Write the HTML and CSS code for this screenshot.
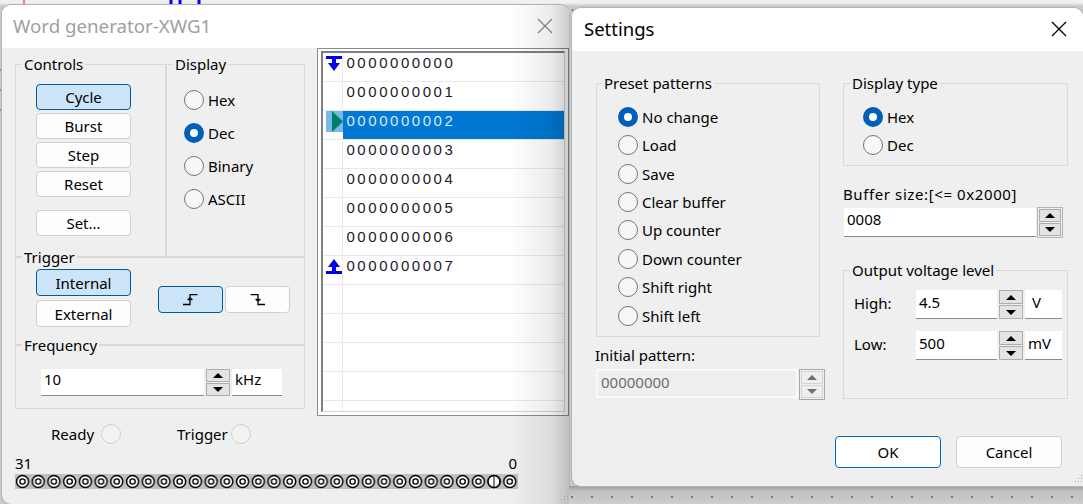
FILE: index.html
```html
<!DOCTYPE html>
<html lang="en">
<head>
    <meta charset="UTF-8">
    <title>Word generator</title>
    <link rel="stylesheet" href="styles.css">
</head>
<body>
    <!-- Schematic behind the windows -->
    <svg class="schematic" width="1083" height="504">
        <path d="M24 0V4M0 70H2M0 90H2M0 110H2" stroke="#e02020" fill="none"/>
        <path d="M171 0V4M180 0V4M199 0V4" stroke="#0000ff" stroke-width="3" fill="none"/>
    </svg>

    <div class="window word-window">
        <div class="titlebar">
            <span class="title title-inactive">Word generator-XWG1</span>
            <svg class="close" width="16" height="16" viewBox="0 0 16 16"><path d="M1 1L15 15M15 1L1 15" stroke="#8a8a8a" stroke-width="1.3"/></svg>
        </div>
        <div class="word-body">
            <div class="word-left">
                <div class="frame-top">
                    <fieldset class="group controls">
                        <legend>Controls</legend>
                        <button class="btn is-on">Cycle</button>
                        <button class="btn">Burst</button>
                        <button class="btn">Step</button>
                        <button class="btn">Reset</button>
                        <button class="btn btn-set">Set...</button>
                    </fieldset>
                    <fieldset class="group display">
                        <legend>Display</legend>
                        <label class="radio-row"><input type="radio" name="display">Hex</label>
                        <label class="radio-row"><input type="radio" name="display" checked>Dec</label>
                        <label class="radio-row"><input type="radio" name="display">Binary</label>
                        <label class="radio-row"><input type="radio" name="display">ASCII</label>
                    </fieldset>
                </div>
                <fieldset class="group trigger">
                    <legend>Trigger</legend>
                    <div class="trigger-src">
                        <button class="btn is-on">Internal</button>
                        <button class="btn">External</button>
                    </div>
                    <div class="edge-btns">
                        <button class="btn edge is-on">
                            <svg width="15" height="12" viewBox="0 0 15 12"><path d="M0 10.5H7V0.5H14.5M4.5 5.5H9.5M5.5 4.5H8.5" stroke="#000" stroke-width="1.3" fill="none"/></svg>
                        </button>
                        <button class="btn edge">
                            <svg width="15" height="12" viewBox="0 0 15 12"><path d="M0.5 0.5H8V10.5H15M5.5 5.5H10.5M6.5 6.5H9.5" stroke="#000" stroke-width="1.3" fill="none"/></svg>
                        </button>
                    </div>
                </fieldset>
                <fieldset class="group frequency">
                    <legend>Frequency</legend>
                    <input class="field freq-value" value="10">
                    <div class="spin"><span class="spin-btn up"></span><span class="spin-btn down"></span></div>
                    <input class="field freq-unit" value="kHz">
                </fieldset>
                <div class="status">
                    <div class="status-item ready">Ready <span class="led"></span></div>
                    <div class="status-item">Trigger <span class="led"></span></div>
                </div>
            </div>

            <div class="word-list">
                <div class="word-list-inner">
                    <div class="row"><span class="mark"><svg width="16" height="16" viewBox="0 0 16 16"><path d="M0 0H16V3H10V7H14L8 15L2 7H6V3H0Z" fill="#0000f0"/></svg></span><span class="val">0000000000</span></div>
                    <div class="row"><span class="mark"></span><span class="val">0000000001</span></div>
                    <div class="row row-current"><span class="mark"><svg width="17" height="21" viewBox="0 0 17 21"><rect width="17" height="21" fill="#7ab8e6"/><path d="M6 0L17 10.5L6 21Z" fill="#00806a"/></svg></span><span class="val">0000000002</span></div>
                    <div class="row"><span class="mark"></span><span class="val">0000000003</span></div>
                    <div class="row"><span class="mark"></span><span class="val">0000000004</span></div>
                    <div class="row"><span class="mark"></span><span class="val">0000000005</span></div>
                    <div class="row"><span class="mark"></span><span class="val">0000000006</span></div>
                    <div class="row"><span class="mark"><svg width="16" height="16" viewBox="0 0 16 16"><path d="M8 0L14 8H10V12H16V15H0V12H6V8H2Z" fill="#0000f0"/></svg></span><span class="val">0000000007</span></div>
                    <div class="row"><span class="mark"></span><span class="val"></span></div>
                    <div class="row"><span class="mark"></span><span class="val"></span></div>
                    <div class="row"><span class="mark"></span><span class="val"></span></div>
                    <div class="row"><span class="mark"></span><span class="val"></span></div>
                    <div class="row"><span class="mark"></span><span class="val"></span></div>
                </div>
            </div>
        </div>

        <div class="bits">
            <div class="bit-labels"><span>31</span><span>0</span></div>
            <svg class="pins" width="503" height="15" viewBox="0 0 503 15">
                <defs>
                    <pattern id="pin" width="15.72" height="15" patternUnits="userSpaceOnUse">
                        <rect width="15.72" height="15" fill="#c0c0c0"/>
                        <circle cx="7.5" cy="7.5" r="6" fill="#fff" stroke="#000" stroke-width="1.5"/>
                        <circle cx="7.5" cy="7.5" r="2.6" fill="#fff" stroke="#000" stroke-width="1.4"/>
                    </pattern>
                </defs>
                <rect width="503" height="15" fill="url(#pin)"/>
                <circle cx="479" cy="7.5" r="6" fill="#fff" stroke="#000" stroke-width="1.5"/>
                <path d="M479 2V13" stroke="#000"/>
            </svg>
        </div>

        <div class="side-shade"></div>
        <svg class="grip grip-left" width="12" height="12"><path d="M10 1h1v1h-1zM7 4h1v1H7zM10 4h1v1h-1zM4 7h1v1H4zM7 7h1v1H7zM10 7h1v1h-1z" fill="#a0a0a0"/></svg>
    </div>

    <div class="window settings-window">
        <div class="titlebar">
            <span class="title">Settings</span>
            <svg class="close" width="16" height="16" viewBox="0 0 16 16"><path d="M1 1L15 15M15 1L1 15" stroke="#000" stroke-width="1.3"/></svg>
        </div>
        <div class="settings-body">
            <div class="settings-cols">
                <div class="settings-left">
                    <fieldset class="group preset">
                        <legend>Preset patterns</legend>
                        <label class="radio-row"><input type="radio" name="preset" checked>No change</label>
                        <label class="radio-row"><input type="radio" name="preset">Load</label>
                        <label class="radio-row"><input type="radio" name="preset">Save</label>
                        <label class="radio-row"><input type="radio" name="preset">Clear buffer</label>
                        <label class="radio-row"><input type="radio" name="preset">Up counter</label>
                        <label class="radio-row"><input type="radio" name="preset">Down counter</label>
                        <label class="radio-row"><input type="radio" name="preset">Shift right</label>
                        <label class="radio-row"><input type="radio" name="preset">Shift left</label>
                    </fieldset>
                    <div class="field-label initial-label">Initial pattern:</div>
                    <div class="input-spin">
                        <input class="field field-disabled initial-value" value="00000000" disabled>
                        <div class="spin spin-boxed spin-disabled"><span class="spin-btn up"></span><span class="spin-btn down"></span></div>
                    </div>
                </div>
                <div class="settings-right">
                    <fieldset class="group display-type">
                        <legend>Display type</legend>
                        <label class="radio-row"><input type="radio" name="dtype" checked>Hex</label>
                        <label class="radio-row"><input type="radio" name="dtype">Dec</label>
                    </fieldset>
                    <div class="field-label buffer-label">Buffer size:[&lt;= 0x2000]</div>
                    <div class="input-spin">
                        <input class="field buffer-value" value="0008">
                        <div class="spin spin-boxed"><span class="spin-btn up"></span><span class="spin-btn down"></span></div>
                    </div>
                    <fieldset class="group voltage">
                        <legend>Output voltage level</legend>
                        <div class="volt-row">
                            <span class="volt-name">High:</span>
                            <input class="field volt-value" value="4.5">
                            <div class="spin"><span class="spin-btn up"></span><span class="spin-btn down"></span></div>
                            <input class="field volt-unit" value=" V">
                        </div>
                        <div class="volt-row">
                            <span class="volt-name">Low:</span>
                            <input class="field volt-value" value="500">
                            <div class="spin"><span class="spin-btn up"></span><span class="spin-btn down"></span></div>
                            <input class="field volt-unit" value="mV">
                        </div>
                    </fieldset>
                </div>
            </div>
            <div class="settings-footer">
                <button class="btn btn-dialog btn-default">OK</button>
                <button class="btn btn-dialog">Cancel</button>
            </div>
        </div>
        <svg class="grip grip-right" width="12" height="12"><path d="M10 1h1v1h-1zM7 4h1v1H7zM10 4h1v1h-1zM4 7h1v1H4zM7 7h1v1H7zM10 7h1v1h-1z" fill="#a0a0a0"/></svg>
    </div>

    <div class="desk-shadow"></div>
</body>
</html>
```

FILE: styles.css
```css
/* Desktop behind the windows */
body {
    margin: 0;
    width: 1083px;
    height: 504px;
    position: relative;
    overflow: hidden;
    font-family: "Noto Sans", sans-serif;
    font-size: 15px;
    color: #000;
    background-color: #c9c9c9;
    background-image:
        linear-gradient(to bottom, #f0f0f0 3px, rgba(240, 240, 240, 0) 6px),
        radial-gradient(circle, #808080 1px, transparent 1.2px);
    background-size: 100% 100%, 20px 20px;
    background-position: 0 0, 2.5px 0;
}

.schematic {
    position: absolute;
    left: 0;
    top: 0;
}

.desk-shadow {
    position: absolute;
    left: 569px;
    top: 486px;
    width: 514px;
    height: 18px;
    background-color: #c2c2c2;
    background-image:
        radial-gradient(circle, #777 1px, transparent 1.2px),
        linear-gradient(to bottom, #9a9a9a, #c0c0c0 5px, #cdcdcd);
    background-size: 20px 20px, 100% 100%;
    background-position: -7px 1px, 0 0;
}

/* Windows */
.window {
    position: absolute;
    background: #efefef;
    overflow: hidden;
    box-shadow: 0 0 0 1px #b4b4b4;
}

.word-window {
    left: 2px;
    top: 5px;
    width: 567px;
    height: 499px;
    border-radius: 9px 9px 0 9px;
}

.settings-window {
    left: 572px;
    top: 8px;
    width: 511px;
    height: 478px;
    border-radius: 9px 9px 0 9px;
    z-index: 2;
}

.titlebar {
    height: 43px;
    box-sizing: border-box;
    background: #fff;
    display: flex;
    align-items: center;
    justify-content: space-between;
    padding: 0 16px 2px 11px;
}

.settings-window .titlebar {
    padding-left: 12px;
}

.title {
    font-size: 18.5px;
}

.title-inactive {
    color: #a0a0a0;
    font-size: 18.7px;
}

.side-shade {
    position: absolute;
    right: 0;
    top: 0;
    bottom: 0;
    width: 60px;
    background: linear-gradient(to right, rgba(0, 0, 0, 0), rgba(0, 0, 0, 0.08) 70%, rgba(0, 0, 0, 0.2));
    pointer-events: none;
}

.grip {
    position: absolute;
    right: 0;
    bottom: 0;
}

/* Group boxes, --pad is the left padding that the legend has to undo */
.group {
    --pad: 0px;
    margin: 0;
    padding: 0 0 0 var(--pad);
    min-width: 0;
    border: 1px solid #d9d9d9;
    box-sizing: border-box;
}

.group legend {
    padding: 0 2px;
    margin-left: calc(6px - var(--pad));
    line-height: 20px;
}

/* Buttons */
.btn {
    display: block;
    box-sizing: border-box;
    width: 95px;
    height: 26px;
    padding: 0;
    font: inherit;
    color: #000;
    background: #fdfdfd;
    border: 1px solid #d0d0d0;
    border-radius: 4px;
}

.btn.is-on {
    background: #cce4f7;
    border-color: #005a9e;
}

/* Radios */
.radio-row {
    display: flex;
    align-items: center;
    gap: 4px;
}

.radio-row input {
    appearance: none;
    box-sizing: border-box;
    width: 20px;
    height: 20px;
    margin: 0;
    background: #f7f7f7;
    border: 1.3px solid #757575;
    border-radius: 50%;
}

.radio-row input:checked {
    background: #fff;
    border: 6px solid #0060b8;
}

/* Inputs */
.field {
    box-sizing: border-box;
    height: 27px;
    margin: 0;
    padding: 0 3px 7px;
    font: inherit;
    color: #000;
    background: #fff;
    border: 0;
    border-bottom: 1px solid #8a8a8a;
    outline: none;
}

.field-disabled {
    color: #6d6d6d;
    background: #eeeeee;
    border: 2px solid #fafafa;
}

/* Spin buttons */
.spin {
    display: flex;
    flex-direction: column;
    gap: 1px;
    width: 24px;
}

.spin-btn {
    box-sizing: border-box;
    flex: 1;
    display: flex;
    align-items: center;
    justify-content: center;
    background: #e3e3e3;
    border: 1px solid #adadad;
}

.spin-btn::after {
    content: "";
    border-left: 5px solid transparent;
    border-right: 5px solid transparent;
}

.spin-btn.up::after {
    border-bottom: 5px solid #000;
}

.spin-btn.down::after {
    border-top: 5px solid #000;
}

.spin-boxed {
    box-sizing: border-box;
    width: 26px;
    padding: 1px;
    border: 1px solid #b5b5b5;
}

.spin-disabled {
    border-color: #a8a8a8;
}

.spin-disabled .spin-btn {
    background: #eeeeee;
    border-color: #d4d4d4;
}

.spin-disabled .spin-btn.up::after {
    border-bottom-color: #707070;
}

.spin-disabled .spin-btn.down::after {
    border-top-color: #707070;
}

.input-spin {
    display: flex;
    gap: 1px;
}

.field-label {
    line-height: 20px;
}

/* Word generator, left side */
.word-body {
    display: flex;
    height: 368px;
}

.word-left {
    box-sizing: border-box;
    width: 315px;
    padding: 6px 0 0 13px;
}

.frame-top {
    display: flex;
    width: 290px;
}

.controls {
    --pad: 20px;
    width: 152px;
    height: 204px;
    padding-top: 10px;
    border-width: 1px 2px 0 1px;
}

.controls .btn {
    margin-bottom: 3px;
}

.controls .btn-set {
    margin-top: 13px;
}

.display {
    --pad: 17px;
    flex: 1;
    padding-top: 9px;
    border-width: 1px 1px 0 0;
}

.display .radio-row {
    height: 33px;
}

.trigger {
    --pad: 20px;
    width: 290px;
    height: 98px;
    margin-top: -11px;
    padding-top: 2px;
    display: flex;
    align-items: flex-start;
    border-width: 2px 1px 0 1px;
}

.trigger-src .btn {
    height: 27px;
    margin-bottom: 4px;
}

.edge-btns {
    display: flex;
    gap: 2px;
    margin-left: 27px;
    margin-top: 17px;
}

.edge {
    width: 65px;
    height: 27px;
    display: flex;
    align-items: center;
    justify-content: center;
}

.frequency {
    --pad: 25px;
    width: 290px;
    height: 74px;
    margin-top: -10px;
    padding-top: 14px;
    display: flex;
    align-items: flex-start;
    gap: 2px;
    border-width: 2px 1px 1px 1px;
}

.freq-value {
    width: 163px;
}

.freq-unit {
    width: 50px;
}

.frequency .spin {
    height: 27px;
}

.status {
    display: grid;
    grid-template-columns: 126px auto;
    justify-content: start;
    margin: 15px 0 0 36px;
    width: 250px;
}

.status-item {
    display: flex;
    align-items: center;
    gap: 3px;
}

.status-item.ready {
    gap: 7px;
}

.led {
    width: 20px;
    height: 20px;
    box-sizing: border-box;
    border: 1px solid #cfcfcf;
    border-radius: 50%;
    background: #f2f2f2;
}

/* Word list */
.word-list {
    box-sizing: border-box;
    width: 252px;
    height: 368px;
    margin-left: 1px;
    padding: 2px 3px 3px 3px;
    background: #fff;
    border: 1px solid #868c94;
}

.word-list-inner {
    height: 100%;
    box-sizing: border-box;
    overflow: hidden;
    border: 1px solid #d2d2d2;
    border-left: 2px solid #7f7f7f;
    border-top: 2px solid #7f7f7f;
    background: #fff;
}

.row {
    display: flex;
    height: 29px;
    box-sizing: border-box;
    border-bottom: 1px solid #e9e9e9;
}

.mark {
    width: 20px;
    flex: none;
    box-sizing: border-box;
    padding: 3px 0 0 3px;
    border-right: 1px solid #e9e9e9;
}

.mark svg {
    display: block;
}

.val {
    flex: 1;
    padding-left: 3px;
    font-family: "Liberation Sans", sans-serif;
    font-size: 15px;
    letter-spacing: 2.55px;
    line-height: 20px;
    color: #1a1a2a;
}

.row-current .val {
    color: #dbe9f7;
    background: #0078d4;
}

.row-current .mark {
    padding: 0 0 0 3px;
    border-right: 0;
}

/* Bit pins */
.bits {
    padding: 0 0 0 13px;
    width: 503px;
    margin-top: 37px;
}

.bit-labels {
    display: flex;
    justify-content: space-between;
    line-height: 20px;
    padding-right: 1px;
}

.pins {
    display: block;
    margin-top: 1px;
}

/* Settings dialog */
.settings-body {
    padding: 23px 15px 0 23px;
    margin-top: -8px;
}

.settings-cols {
    display: flex;
    gap: 18px;
    height: 355px;
    padding-top: 7px;
}

.settings-left {
    width: 230px;
}

.settings-right {
    width: 225px;
}

.preset {
    --pad: 21px;
    width: 224px;
    height: 264px;
    padding-top: 9.6px;
    margin-left: 1px;
}

.preset legend {
    margin-left: calc(5px - var(--pad));
}

.preset .radio-row {
    height: 28.43px;
}

.initial-label {
    margin-top: 8px;
}

.initial-value {
    width: 202px;
    height: 29px;
    margin-left: 1px;
    margin-top: 4px;
    padding-bottom: 4px;
}

.settings-left .spin {
    margin-top: 4px;
    height: 31px;
}

.display-type {
    --pad: 19px;
    height: 93px;
    padding-top: 10px;
}

.display-type .radio-row {
    height: 28px;
}

.buffer-label {
    margin-top: 18px;
    letter-spacing: 0.6px;
}

.buffer-value {
    width: 192px;
    height: 29px;
    margin: 4px 0 0 1px;
}

.settings-right .spin-boxed {
    margin-top: 3px;
    height: 31px;
}

.voltage {
    --pad: 10px;
    height: 139px;
    margin-top: 22px;
    padding-top: 10px;
}

.volt-row {
    display: flex;
    align-items: stretch;
    gap: 2px;
    height: 29px;
    margin-bottom: 12px;
}

.volt-name {
    width: 60px;
    line-height: 27px;
}

.volt-value {
    width: 81px;
    height: 29px;
    padding-bottom: 4px;
}

.volt-unit {
    width: 37px;
    height: 29px;
    padding-bottom: 5px;
}

.settings-footer {
    display: flex;
    justify-content: flex-end;
    gap: 15px;
    margin-top: 8px;
    padding-right: 6px;
}

.btn-dialog {
    width: 106px;
    height: 32px;
}

.btn-default {
    border-color: #0067c0;
    background: #fff;
}
```
